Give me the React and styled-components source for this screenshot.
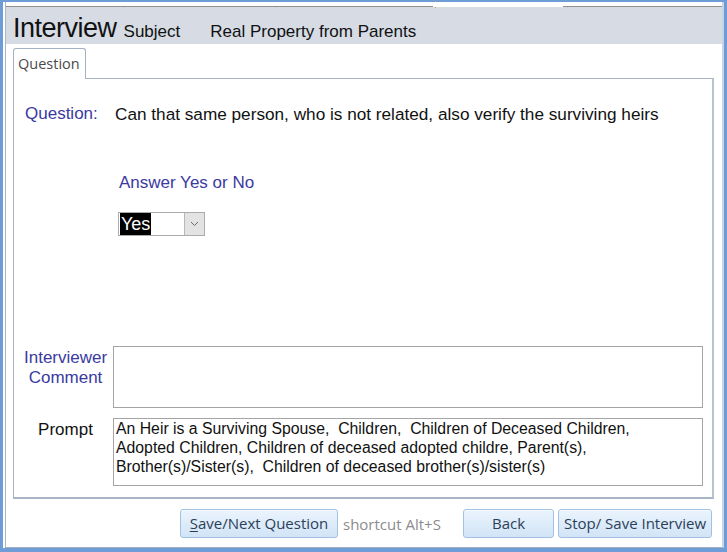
import React from "react";
import styled, { createGlobalStyle } from "styled-components";

const Global = createGlobalStyle`
  html, body { margin: 0; padding: 0; background: #ffffff; }
  * { box-sizing: border-box; }
`;

const Window = styled.div`
  width: 727px;
  height: 552px;
  border: 3px solid #6d9cd6;
  border-top-width: 2px;
  border-bottom-width: 4px;
  background: #ffffff;
  display: flex;
  flex-direction: column;
  font-family: "Liberation Sans", Arial, sans-serif;
`;

const Frame = styled.div`
  flex: 1;
  margin-left: 2px;
  border-left: 1px solid #aab6c6;
  border-right: 2px solid #c8d5e7;
  border-bottom: 1px solid #a3b0c2;
  display: flex;
  flex-direction: column;
`;

const TopStrip = styled.div`
  height: 5px;
  display: flex;
`;

const TabStub = styled.div`
  position: relative;
  width: ${(p) => p.$w}px;
  flex: ${(p) => (p.$grow ? 1 : "none")};
  border-bottom: 1px solid ${(p) => (p.$active ? "transparent" : "#8f8f8f")};
  background: #ffffff;
  &::after {
    content: "";
    display: ${(p) => (p.$edge ? "block" : "none")};
    position: absolute;
    right: -3px;
    top: -1px;
    width: 1px;
    height: 7px;
    background: ${(p) => (p.$edge === "v" ? "#c89a6a" : "#9a9a9a")};
    transform: ${(p) => (p.$edge === "v" ? "none" : "rotate(-40deg)")};
  }
`;

const Header = styled.div`
  height: 37px;
  background: #d6dbe4;
  display: flex;
  align-items: baseline;
  padding: 6px 0 0 7px;
  line-height: 30px;
  color: #111111;
`;

const Title = styled.span`
  font-size: 27px;
  letter-spacing: -0.5px;
`;

const HeadText = styled.span`
  font-size: 17px;
  margin-left: ${(p) => p.$ml}px;
`;

const Body = styled.div`
  padding: 4px 8px 0 7px;
  display: flex;
  flex-direction: column;
`;

const Tab = styled.div`
  width: 73px;
  height: 31px;
  margin-bottom: -1px;
  border: 1px solid #a3b1c4;
  border-bottom: none;
  border-radius: 3px 3px 0 0;
  background: #ffffff;
  padding: 5px 0 0 4px;
  font-family: "Open Sans", sans-serif;
  font-size: 14.5px;
  line-height: 20px;
  color: #4a4a4a;
  position: relative;
  z-index: 1;
`;

const Panel = styled.div`
  border: 1px solid #a8b5c7;
  border-right: 2px solid #b6c3d4;
  border-bottom: 2px solid #a8b5c7;
  padding: 25px 9px 11px 10px;
  display: grid;
  grid-template-columns: 89px 1fr;
  align-items: start;
`;

const Label = styled.div`
  font-size: 17px;
  line-height: 20px;
  color: ${(p) => (p.$black ? "#111111" : "#3a3aa2")};
  text-align: ${(p) => (p.$center ? "center" : "left")};
  padding: ${(p) => p.$pt || 0}px ${(p) => (p.$center ? 6 : 0)}px 0 ${(p) => (p.$center ? 0 : 1)}px;
  grid-column: 1;
  margin-top: ${(p) => p.$mt || 0}px;
`;

const QuestionText = styled.div`
  font-size: 17.2px;
  line-height: 20px;
  color: #111111;
  padding-left: 2px;
  white-space: nowrap;
`;

const AnswerBlock = styled.div`
  grid-column: 2;
  padding-left: 5px;
  margin-top: 49px;
  display: flex;
  flex-direction: column;
  align-items: flex-start;
`;

const AnswerLabel = styled.div`
  font-size: 17px;
  line-height: 20px;
  color: #3a3aa2;
  padding-left: 1px;
`;

const Select = styled.div`
  margin-top: 19px;
  width: 87px;
  height: 24px;
  border: 1px solid #ababab;
  display: flex;
  background: #ffffff;
`;

const SelectValue = styled.div`
  flex: 1;
  padding: 0 0 0 1px;
  display: flex;
`;

const Selected = styled.span`
  background: #000000;
  color: #ffffff;
  font-size: 18px;
  line-height: 22px;
  padding: 0 1px;
`;

const DropButton = styled.div`
  width: 20px;
  background: #e3e3e3;
  border-left: 1px solid #b8b8b8;
  display: flex;
  align-items: center;
  justify-content: center;
`;

const TextBox = styled.div`
  grid-column: 2;
  height: ${(p) => p.$h}px;
  margin-top: ${(p) => p.$mt || 0}px;
  border: 1px solid #a5a5a5;
  padding: 0 0 0 2px;
  font-size: 15.8px;
  line-height: 19px;
  color: #111111;
  white-space: pre-wrap;
`;

const ButtonRow = styled.div`
  margin-top: 10px;
  padding-left: 167px;
  display: flex;
  align-items: center;
`;

const Button = styled.button`
  width: ${(p) => p.$w}px;
  height: 29px;
  margin-left: ${(p) => p.$ml || 0}px;
  border: 1px solid #a3c1e2;
  border-radius: 3px;
  background: linear-gradient(#ebf4fd, #d1e4f7);
  box-shadow: inset 0 1px 0 #f7fbff;
  font-family: "Open Sans", sans-serif;
  font-size: 15px;
  color: #2b3f58;
  padding: 0;
  line-height: 27px;
  u { text-decoration: underline; text-underline-offset: 2px; }
`;

const Shortcut = styled.span`
  width: 125px;
  padding-left: 5px;
  font-family: "Open Sans", sans-serif;
  font-size: 15px;
  color: #8c8c8c;
  white-space: nowrap;
`;

const promptText =
  "An Heir is a Surviving Spouse,  Children,  Children of Deceased Children,\nAdopted Children, Children of deceased adopted childre, Parent(s),\nBrother(s)/Sister(s),  Children of deceased brother(s)/sister(s)";

export default function App() {
  return (
    <>
      <Global />
      <Window>
        <Frame>
          <TopStrip>
            <TabStub $w={114} $edge="d" />
            <TabStub $w={151} $edge="d" />
            <TabStub $w={162} $edge="v" />
            <TabStub $w={130} $active $edge="d" />
            <TabStub $grow />
          </TopStrip>
          <Header>
            <Title>Interview</Title>
            <HeadText $ml={7}>Subject</HeadText>
            <HeadText $ml={30}>Real Property from Parents</HeadText>
          </Header>
          <Body>
            <Tab>Question</Tab>
            <Panel>
              <Label>Question:</Label>
              <QuestionText>
                Can that same person, who is not related, also verify the surviving heirs
              </QuestionText>
              <AnswerBlock>
                <AnswerLabel>Answer Yes or No</AnswerLabel>
                <Select>
                  <SelectValue>
                    <Selected>Yes</Selected>
                  </SelectValue>
                  <DropButton>
                    <svg width="9" height="6" viewBox="0 0 9 6">
                      <path d="M1 1l3.5 3.5L8 1" fill="none" stroke="#6b6b6b" strokeWidth="1" />
                    </svg>
                  </DropButton>
                </Select>
              </AnswerBlock>
              <Label $center $pt={2} $mt={110}>
                Interviewer Comment
              </Label>
              <TextBox $h={62} $mt={110} />
              <Label $center $black $pt={2} $mt={10}>
                Prompt
              </Label>
              <TextBox $h={68} $mt={10}>
                {promptText}
              </TextBox>
            </Panel>
            <ButtonRow>
              <Button $w={158}>
                <u>S</u>ave/Next Question
              </Button>
              <Shortcut>shortcut Alt+S</Shortcut>
              <Button $w={91}>Back</Button>
              <Button $w={154} $ml={4}>
                Stop/ Save Interview
              </Button>
            </ButtonRow>
          </Body>
        </Frame>
      </Window>
    </>
  );
}
